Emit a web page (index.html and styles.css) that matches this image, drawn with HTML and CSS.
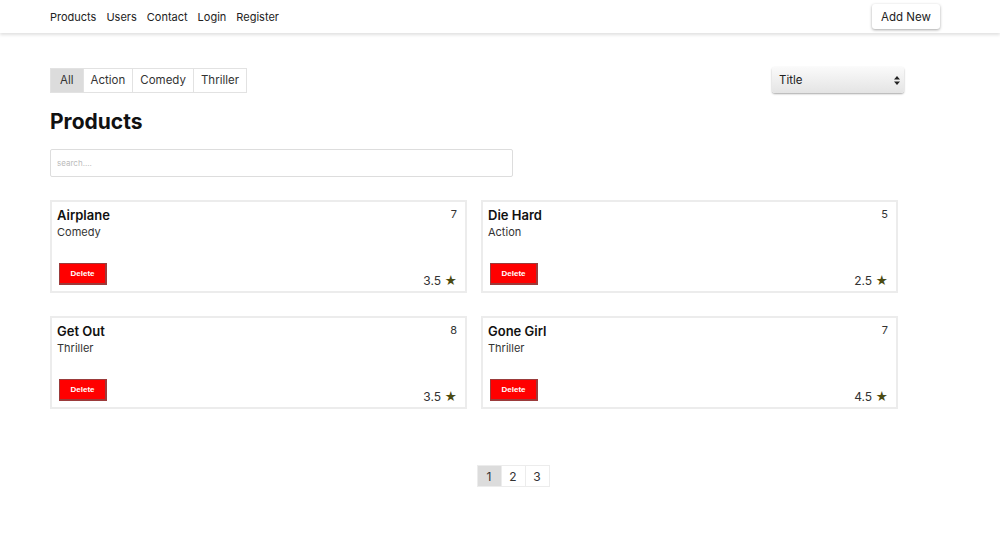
FILE: index.html
```html
<!DOCTYPE html>
<html lang="en">
<head>
  <meta charset="UTF-8">
  <title>Products</title>
  <link rel="stylesheet" href="styles.css">
</head>
<body>

  <div class="navbar">
    <div class="nav-links">
      <a href="#">Products</a>
      <a href="#">Users</a>
      <a href="#">Contact</a>
      <a href="#">Login</a>
      <a href="#">Register</a>
    </div>
    <button class="btn-add">Add New</button>
  </div>

  <div class="main">
    <div class="toolbar">
      <div class="filtri">
        <button class="filtro attivo">All</button>
        <button class="filtro">Action</button>
        <button class="filtro">Comedy</button>
        <button class="filtro">Thriller</button>
      </div>
      <div class="ordina">
        <span>Title</span>
        <svg width="6" height="9" viewBox="0 0 6 9"><path d="M3 0 L6 3.5 H0 Z M3 9 L0 5.5 H6 Z" fill="#222"/></svg>
      </div>
    </div>

    <h1 class="titolo">Products</h1>

    <input class="cerca" type="text" placeholder="search....">

    <div class="griglia">
      <div class="card">
        <div class="card-top">
          <div>
            <div class="card-nome">Airplane</div>
            <div class="card-genere">Comedy</div>
          </div>
          <div class="card-num">7</div>
        </div>
        <div class="card-bottom">
          <button class="btn-delete">Delete</button>
          <div class="voto">3.5 <span class="stella">★</span></div>
        </div>
      </div>
      <div class="card">
        <div class="card-top">
          <div>
            <div class="card-nome">Die Hard</div>
            <div class="card-genere">Action</div>
          </div>
          <div class="card-num">5</div>
        </div>
        <div class="card-bottom">
          <button class="btn-delete">Delete</button>
          <div class="voto">2.5 <span class="stella">★</span></div>
        </div>
      </div>
      <div class="card">
        <div class="card-top">
          <div>
            <div class="card-nome">Get Out</div>
            <div class="card-genere">Thriller</div>
          </div>
          <div class="card-num">8</div>
        </div>
        <div class="card-bottom">
          <button class="btn-delete">Delete</button>
          <div class="voto">3.5 <span class="stella">★</span></div>
        </div>
      </div>
      <div class="card">
        <div class="card-top">
          <div>
            <div class="card-nome">Gone Girl</div>
            <div class="card-genere">Thriller</div>
          </div>
          <div class="card-num">7</div>
        </div>
        <div class="card-bottom">
          <button class="btn-delete">Delete</button>
          <div class="voto">4.5 <span class="stella">★</span></div>
        </div>
      </div>
    </div>

    <div class="paginazione">
      <span class="pagina attiva">1</span>
      <span class="pagina">2</span>
      <span class="pagina">3</span>
    </div>
  </div>

</body>
</html>
```

FILE: styles.css
```css
body {
  margin: 0;
  font-family: Inter, "Liberation Sans", Arial, sans-serif;
  color: #222;
  background: #fff;
}
.navbar {
  height: 33px;
  display: flex;
  align-items: center;
  justify-content: space-between;
  padding: 0 60px 0 50px;
  box-shadow: 0 2px 3px rgba(0, 0, 0, 0.12);
}
.nav-links {
  display: flex;
  gap: 10px;
}
.nav-links a {
  color: #222;
  text-decoration: none;
  font-size: 11px;
}
.btn-add {
  font-family: inherit;
  font-size: 11.5px;
  color: #222;
  background: #fff;
  border: none;
  border-radius: 3px;
  box-shadow: 0 1px 3px rgba(0, 0, 0, 0.35);
  height: 25px;
  width: 68px;
}
.main {
  padding: 34px 0 0 50px;
}
.toolbar {
  width: 854px;
  display: flex;
  justify-content: space-between;
  align-items: center;
}
.filtri {
  display: flex;
}
.filtro {
  font-family: inherit;
  font-size: 11.5px;
  color: #333;
  background: #fff;
  border: 1px solid #e2e2e2;
  margin-left: -1px;
  height: 25px;
  padding: 0 7px;
}
.filtro:first-child {
  margin-left: 0;
}
.filtro.attivo {
  background: #dcdcdc;
  padding: 0 9px;
}
.ordina {
  width: 132px;
  height: 26px;
  box-sizing: border-box;
  display: flex;
  align-items: center;
  justify-content: space-between;
  padding: 0 4px 0 7px;
  font-size: 11.5px;
  border-radius: 3px;
  background: linear-gradient(#fafafa, #e4e4e4);
  box-shadow: 0 1px 2px rgba(0, 0, 0, 0.35);
}
.titolo {
  margin: 16px 0 15px;
  font-size: 21px;
  font-weight: 700;
  color: #111;
}
.cerca {
  display: block;
  width: 463px;
  height: 28px;
  box-sizing: border-box;
  border: 1px solid #ddd;
  border-radius: 2px;
  padding: 0 6px;
  font-family: inherit;
  font-size: 8px;
  margin: 0;
}
.cerca::placeholder {
  color: #bbb;
}
.griglia {
  display: grid;
  grid-template-columns: 417px 417px;
  column-gap: 14px;
  row-gap: 23px;
  margin-top: 23px;
}
.card {
  height: 93px;
  box-sizing: border-box;
  border: 2px solid #ececec;
  padding: 5px 8px 3px 5px;
  display: flex;
  flex-direction: column;
  justify-content: space-between;
}
.card-top {
  display: flex;
  justify-content: space-between;
}
.card-nome {
  font-size: 13px;
  font-weight: 600;
  color: #111;
}
.card-genere {
  font-size: 11px;
  color: #333;
  margin-top: 2px;
}
.card-num {
  font-size: 11px;
  color: #333;
}
.card-bottom {
  display: flex;
  justify-content: space-between;
  align-items: flex-end;
}
.btn-delete {
  font-family: "Liberation Sans", Arial, sans-serif;
  font-size: 8px;
  font-weight: bold;
  color: #fff;
  background: #ff0000;
  border: 1px solid #9b3b3b;
  border-right-width: 2px;
  border-bottom-width: 2px;
  width: 48px;
  height: 22px;
  margin: 0 0 3px 2px;
}
.voto {
  font-size: 12px;
  line-height: 14px;
  color: #333;
}
.stella {
  color: #4b4b12;
}
.paginazione {
  width: 927px;
  display: flex;
  justify-content: center;
  margin-top: 56px;
}
.pagina {
  width: 25px;
  height: 22px;
  display: flex;
  align-items: center;
  justify-content: center;
  font-size: 12px;
  color: #333;
  border: 1px solid #ececec;
  margin-left: -1px;
  box-sizing: border-box;
}
.pagina.attiva {
  background: #dcdcdc;
}
```
